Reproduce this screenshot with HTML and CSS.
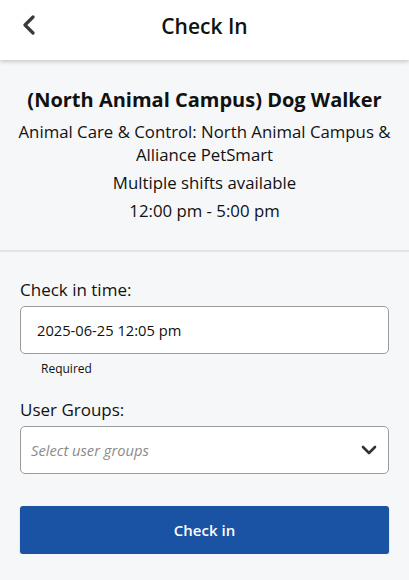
FILE: index.html
```html
<!DOCTYPE html>
<html lang="en">

<head>
  <meta charset="UTF-8" />
  <meta name="viewport" content="width=device-width, initial-scale=1.0" />
  <title>Check In</title>
  <link rel="stylesheet" href="styles.css">
</head>

<body>
  <header class="top-bar">
    <button class="back-button" aria-label="Back">
      <svg width="14" height="20" viewBox="0 0 14 20">
        <path d="M11 2 L3 10 L11 18" fill="none" stroke="#3a3a3a" stroke-width="3.2" stroke-linecap="round" stroke-linejoin="round" />
      </svg>
    </button>
    <h1>Check In</h1>
  </header>

  <section class="shift-info">
    <h2>(North Animal Campus) Dog Walker</h2>
    <p>Animal Care &amp; Control: North Animal Campus &amp; Alliance PetSmart</p>
    <p>Multiple shifts available</p>
    <p>12:00 pm - 5:00 pm</p>
  </section>

  <form class="check-in-form" onsubmit="return false;">
    <label for="checkInTime">Check in time:</label>
    <div class="field" id="checkInTime">2025-06-25 12:05 pm</div>
    <p class="hint">Required</p>

    <label for="userGroups">User Groups:</label>
    <div class="field select-field" id="userGroups">
      <span class="placeholder">Select user groups</span>
      <svg width="16" height="10" viewBox="0 0 16 10">
        <path d="M2 2 L8 8 L14 2" fill="none" stroke="#333" stroke-width="2.6" stroke-linecap="round" stroke-linejoin="round" />
      </svg>
    </div>

    <button class="check-in-button" type="submit">Check in</button>
  </form>
</body>

</html>
```

FILE: styles.css
```css
body {
  margin: 0;
  font-family: "Open Sans", Arial, sans-serif;
  background-color: #f6f7f9;
  color: #111;
}

.top-bar {
  height: 60px;
  background-color: #ffffff;
  box-shadow: 0 2px 4px rgba(0, 0, 0, 0.18);
  display: flex;
  align-items: center;
  justify-content: center;
  position: relative;
}

.top-bar h1 {
  margin: 0 0 8px 0;
  font-size: 21px;
  font-weight: 600;
}

.back-button {
  position: absolute;
  top: 15px;
  left: 22px;
  padding: 0;
  border: none;
  background: none;
  cursor: pointer;
}

.shift-info {
  text-align: center;
  padding: 27px 8px 23px;
  border-bottom: 2px solid #e2e3e6;
}

.shift-info h2 {
  margin: 0 0 7px 0;
  font-size: 20px;
  font-weight: 700;
  line-height: 26px;
}

.shift-info p {
  margin: 0 0 5px 0;
  font-size: 16.8px;
  line-height: 23px;
}

.check-in-form {
  padding: 26px 20px 0;
}

label {
  display: block;
  font-size: 17px;
  line-height: 24px;
  margin-bottom: 4px;
}

.field {
  height: 46px;
  background-color: #ffffff;
  border: 1px solid #9b9b9b;
  border-radius: 5px;
  display: flex;
  align-items: center;
  padding: 0 16px;
  font-size: 14.7px;
  color: #111;
}

.hint {
  margin: 6px 0 20px 21px;
  font-size: 12px;
  line-height: 18px;
}

.select-field {
  justify-content: space-between;
  padding: 0 11px 0 10px;
}

.placeholder {
  color: #8a8a8a;
  font-style: italic;
}

.check-in-button {
  display: block;
  width: 100%;
  height: 48px;
  margin-top: 32px;
  border: none;
  border-radius: 3px;
  background-color: #1a52a4;
  color: #ffffff;
  font-family: "Open Sans", Arial, sans-serif;
  font-size: 15px;
  font-weight: 600;
  box-shadow: 0 1px 2px rgba(0, 0, 0, 0.2);
  cursor: pointer;
}
```
